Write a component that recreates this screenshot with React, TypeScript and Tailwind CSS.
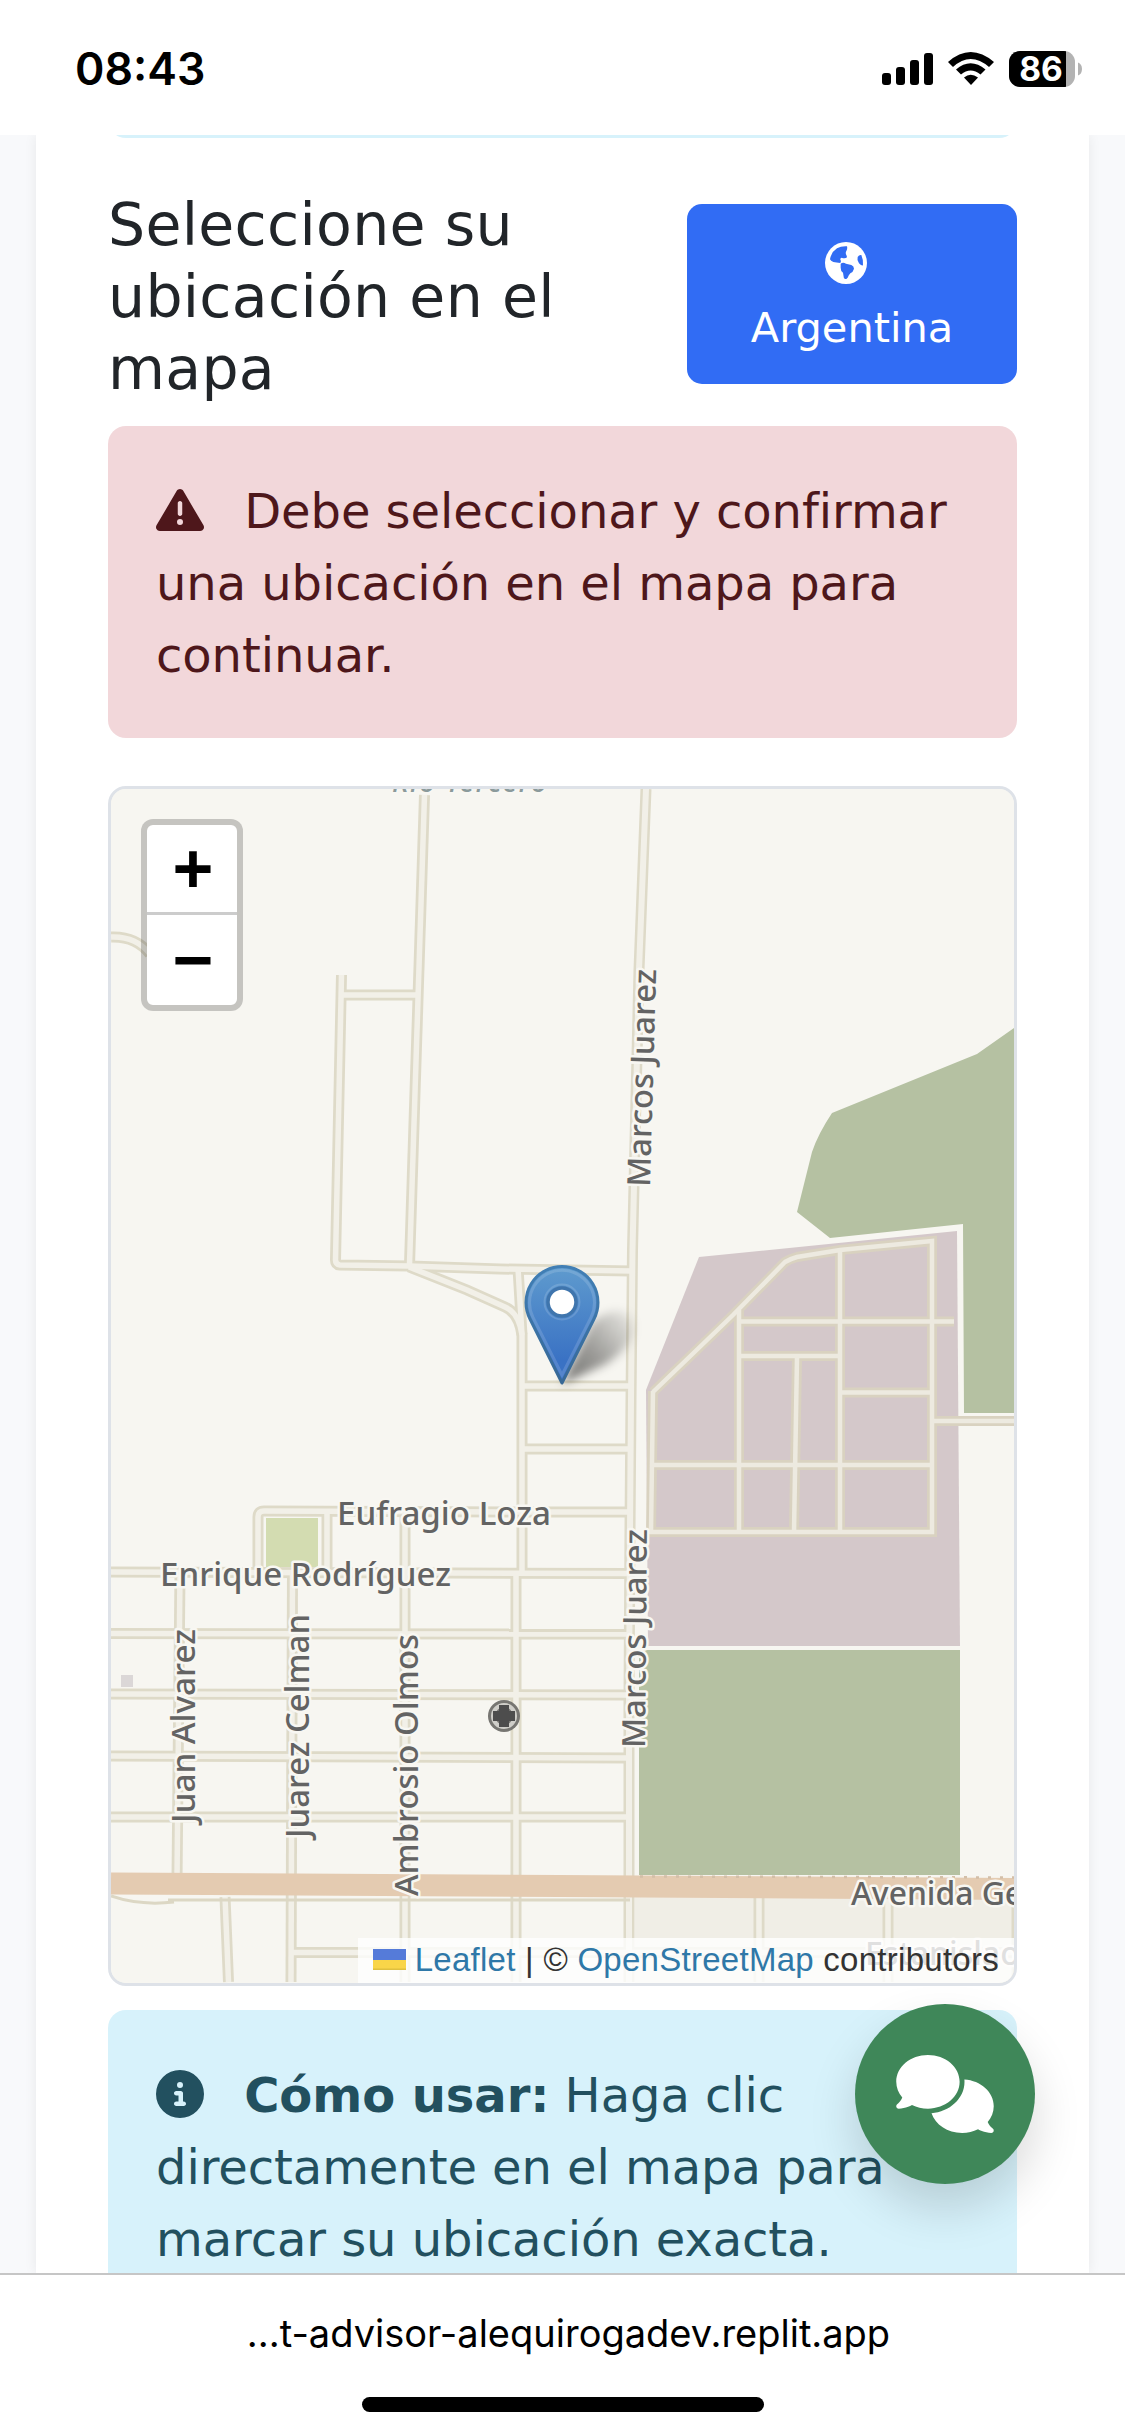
import React from "react";
import { FaCircleInfo, FaComments, FaTriangleExclamation } from "react-icons/fa6";

const streets: string[] = [
  "M424.5 795L409.5 1265",
  "M341.5 975L335.5 1260Q335.5 1264.5 340 1265L409 1266L500 1269L632 1271",
  "M341 995H418",
  "M409 1267L467 1290L505 1307Q519 1313 522 1335",
  "M518 1268L522 1335V1470V1573",
  "M522 1386H631",
  "M522 1449H631",
  "M258 1575V1517Q258 1511 264 1511L522 1512H630",
  "M327 1511V1575",
  "M111 1572L450 1573L630 1573.5",
  "M111 1633.5L630 1634",
  "M111 1694L630 1695",
  "M111 1756L630 1758",
  "M111 1817H630",
  "M180 1572L177 1880",
  "M292.5 1572L291 1982",
  "M405 1511V1982",
  "M516 1573V1982",
  "M225 1897L228.5 1982",
  "M291 1952.5H1014",
  "M759 1897V1982",
  "M888 1897V1982",
  "M1017 1897V1982",
  "M111 937Q136 936 150 954",
];

const mainRoad = "M646 789L639 970L632.5 1250L631 1400L630 1530L629 1700V1982";

const blockStreets: string[] = [
  "M653 1392L733 1315L785 1262Q790 1259 797 1257L840 1250L932 1241V1532H651L653 1391",
  "M739 1310V1532",
  "M840 1250V1532",
  "M797 1357L794 1532",
  "M739 1321.5H954",
  "M739 1356H840",
  "M840 1392.5H933",
  "M651 1465H933",
  "M932 1421H1014",
];

type Label = { text: string; x: number; y: number; length?: number; angle?: number };

const labels: Label[] = [
  { text: "Eufragio Loza", x: 337, y: 1525, length: 214 },
  { text: "Enrique Rodríguez", x: 160, y: 1586, length: 291 },
  { text: "Juan Alvarez", x: 195, y: 1823, length: 194, angle: -90 },
  { text: "Juarez Celman", x: 309, y: 1838, length: 224, angle: -90 },
  { text: "Ambrosio Olmos", x: 418, y: 1896, length: 262, angle: -90 },
  { text: "Marcos Juarez", x: 650, y: 1187, length: 218, angle: -88.4 },
  { text: "Marcos Juarez", x: 645, y: 1748, length: 219, angle: -89.5 },
  { text: "Avenida General", x: 851, y: 1905, length: 250 },
  { text: "Estanislao", x: 865, y: 1965 },
];

function StreetMap() {
  return (
    <svg className="block h-full w-full" viewBox="111 789 903 1194" aria-label="Mapa">
      <defs>
        <linearGradient id="pin" x1="0" y1="0" x2="0" y2="1">
          <stop offset="0" stopColor="#5f9bce" />
          <stop offset="0.8" stopColor="#3a72c4" />
          <stop offset="1" stopColor="#3a72c4" />
        </linearGradient>
        <linearGradient id="pinEdge" x1="0" y1="0" x2="0" y2="1">
          <stop offset="0" stopColor="#417fb5" />
          <stop offset="1" stopColor="#376896" />
        </linearGradient>
        <linearGradient id="shade" gradientUnits="userSpaceOnUse" x1="562" y1="1384" x2="640" y2="1318">
          <stop offset="0" stopColor="#000" stopOpacity="0.55" />
          <stop offset="0.45" stopColor="#000" stopOpacity="0.36" />
          <stop offset="1" stopColor="#000" stopOpacity="0.03" />
        </linearGradient>
        <filter id="soft" x="-30%" y="-30%" width="160%" height="160%">
          <feGaussianBlur stdDeviation="5" />
        </filter>
      </defs>
      <rect x="111" y="789" width="903" height="1194" fill="#f7f6f1" />
      <rect x="635" y="1896" width="379" height="87" fill="#f0eee6" />
      <path d="M1014 1028L977 1054L832 1113Q818 1134 812 1152L797 1212L830 1238L963 1224L964 1413H1014Z" fill="#b5c1a2" />
      <path d="M699 1257L957 1231L960 1646H648L646 1390Z" fill="#d4c8ca" />
      <path d="M639 1650H960V1875H639Z" fill="#b5c1a2" />
      <rect x="266" y="1518" width="52" height="49" fill="#d3dcb1" />
      <rect x="121" y="1675" width="12" height="12" fill="#dbd7d7" />
      <g fill="none" stroke="#dedac8" strokeWidth="11">
        {streets.map((d) => <path key={d} d={d} />)}
        <path d={mainRoad} />
      </g>
      <g fill="none" stroke="#f2f0e8" strokeWidth="5.5">
        {streets.map((d) => <path key={d} d={d} />)}
        <path d={mainRoad} strokeWidth="6" />
      </g>
      <g fill="none" stroke="#d9d2c0" strokeWidth="10">
        {blockStreets.map((d) => <path key={d} d={d} />)}
      </g>
      <g fill="none" stroke="#edeae0" strokeWidth="4.5">
        {blockStreets.map((d) => <path key={d} d={d} />)}
      </g>
      <path d="M111 1896Q140 1906 174 1902M168 1900H630" fill="none" stroke="#dcd7c4" strokeWidth="3" />
      <path d="M111 1883.5L560 1886L1014 1889" fill="none" stroke="#e4cbb1" strokeWidth="22" />
      <path d="M640 1876.5L1014 1877.5" fill="none" stroke="#d3bfa8" strokeWidth="2.5" strokeDasharray="3 9" />
      <g>
        <circle cx="504" cy="1716" r="16" fill="#777672" />
        <circle cx="504" cy="1716" r="11" fill="none" stroke="#cfcec9" strokeWidth="4" />
        <path d="M504 1705V1727M493 1716H515" stroke="#4d4d4d" strokeWidth="10" />
      </g>
      <g
        className="font-['Noto_Sans','Open_Sans',sans-serif]"
        fontSize="32"
        fontWeight="500"
        fill="#636363"
        stroke="#f8f7f2"
        strokeWidth="5"
        strokeLinejoin="round"
        paintOrder="stroke"
      >
        {labels.map((l) => (
          <text
            key={l.text + l.y}
            transform={`translate(${l.x} ${l.y}) rotate(${l.angle ?? 0})`}
            textLength={l.length}
            lengthAdjust="spacingAndGlyphs"
          >
            {l.text}
          </text>
        ))}
        <text x="392" y="792" fill="#8b9a9b" textLength="155" fontStyle="italic" fontSize="28">Río Tercero</text>
      </g>
      <path d="M562 1384L592 1322Q618 1302 632 1318Q640 1342 606 1364Z" fill="url(#shade)" filter="url(#soft)" />
      <path
        d="M562 1383L530 1319A36 36 0 1 1 594 1319Z"
        fill="url(#pin)"
        stroke="url(#pinEdge)"
        strokeWidth="3"
        strokeLinejoin="round"
      />
      <path d="M562 1375L533 1317.500A32.500 32.500 0 1 1 591 1317.500Z" fill="none" stroke="#fff" strokeOpacity="0.14" strokeWidth="3" />
      <circle cx="562" cy="1302" r="17.500" fill="none" stroke="#fff" strokeOpacity="0.14" strokeWidth="2" />
      <circle cx="562" cy="1302" r="14" fill="#fff" stroke="#3f75ad" strokeWidth="3.500" />
    </svg>
  );
}

function GlobeIcon() {
  return (
    <svg className="mr-[12px] size-[42px]" viewBox="432 138 126 126">
      <circle cx="495" cy="201" r="63" fill="#fff" />
      <g fill="#316cf4">
        <path d="M447 190Q451 168 468 157Q480 150 498 151Q500 158 496 165Q492 171 497 179L498 184Q492 189 482 185Q475 187 480 195L478 201Q466 199 457 198Q449 195 447 190Z" />
        <path d="M479 203Q486 198 495 203L511 207Q519 211 519 218Q516 229 508 232Q503 237 500 245L496 249Q488 249 488 242L486 230Q479 226 479 215Z" />
        <path d="M541 177Q547 190 546 208Q540 210 534 202Q527 193 530 183Q534 176 541 177Z" />
      </g>
    </svg>
  );
}

function StatusBar() {
  return (
    <header className="flex h-[135px] shrink-0 items-start justify-between bg-white pl-[75px] pr-[43px] pt-[42px] font-['Inter',sans-serif]">
      <span className="text-[44.6px] font-semibold leading-[54px]">08:43</span>
      <svg className="mt-[7px] h-[40px] w-[202px]" viewBox="880 49 202 40">
        <rect x="882" y="73" width="9" height="12" rx="3" />
        <rect x="896" y="67" width="9" height="18" rx="3" />
        <rect x="910" y="60" width="9" height="25" rx="3" />
        <rect x="924" y="53" width="9" height="32" rx="3" />
        <path d="M948 62Q970.500 42 994 62L989 67Q970.500 51 953 67Z" />
        <path d="M956 69.500Q970.500 57 985.500 69.500L980.500 74.500Q970.500 66.500 961 74.500Z" />
        <path d="M964 77.500Q970.500 72 978 77.500L971 85Z" />
        <clipPath id="charge"><rect x="1009" y="51" width="57" height="36" /></clipPath>
        <rect x="1009" y="51" width="66" height="36" rx="11" fill="#b3b3b3" />
        <rect x="1009" y="51" width="66" height="36" rx="11" clipPath="url(#charge)" />
        <path d="M1078 62.500Q1082 64 1082 69T1078 75.500Z" fill="#b3b3b3" />
        <text x="1041" y="81" textAnchor="middle" fontSize="33.500" fontWeight="700" fill="#fff">86</text>
      </svg>
    </header>
  );
}

export default function App() {
  return (
    <div className="flex h-[2436px] w-[1125px] flex-col overflow-hidden bg-white text-black">
      <StatusBar />
      <main className="relative h-[2138px] shrink-0 overflow-hidden bg-[#f8f9fb] px-9 font-['DejaVu_Sans',Verdana,sans-serif]">
        <div className="h-full bg-white px-[72px] shadow-[0_0_12px_rgba(0,0,0,0.07)]">
          <div className="h-[3px] overflow-hidden">
            <div className="-mt-12 h-[51px] rounded-[18px] bg-[#d7f2fb]" />
          </div>
          <div className="flex h-[264px] items-center justify-between pt-[48px]">
            <h5 className="w-[500px] pt-[5px] text-[58.5px] leading-[72px] tracking-[0.3px] text-[#212529]">
              Seleccione su
              <br />
              ubicación en el
              <br />
              mapa
            </h5>
            <button className="flex h-[180px] w-[330px] flex-col items-center rounded-[15px] bg-[#316cf4] pt-[27px] text-[41.5px] leading-[63px] text-white">
              <span className="flex h-[65px] items-center pb-[2px]">
                <GlobeIcon />
              </span>
              Argentina
            </button>
          </div>
          <div className="mt-[24px] h-[312px] rounded-[18px] bg-[#f2d7da] px-12 pt-[49px] text-[48px] leading-[72px] tracking-[-0.07px] text-[#4e171b]">
            <FaTriangleExclamation className="-mt-2.5 mr-[25px] inline-block size-12 align-middle" /> Debe seleccionar y confirmar
            <br />
            una ubicación en el mapa para
            <br />
            continuar.
          </div>
          <div className="relative mt-12 h-[1200px] overflow-hidden rounded-[18px] border-[3px] border-[#dee2e8] bg-[#f7f6f1]">
            <StreetMap />
            <div className="absolute left-[30px] top-[30px] flex h-[192px] w-[102px] flex-col rounded-[12px] border-[6px] border-black/20 bg-white bg-clip-padding text-center font-['Liberation_Sans',sans-serif] text-[70px] font-bold">
              <button className="h-[90px] border-b-[3px] border-[#ccc] pl-[2px] leading-[86px]">+</button>
              <button className="h-[90px] pl-[2px] leading-[86px]">−</button>
            </div>
            <div className="absolute bottom-0 right-0 flex h-[45px] items-center whitespace-pre bg-white/80 px-[15px] pb-[2px] font-['Liberation_Sans',sans-serif] text-[33px] leading-[43px] tracking-[0.27px] text-[#333]">
              <svg className="mr-[9px] h-[21px] w-[33px]" viewBox="0 0 33 21">
                <path fill="#557bd9" d="M0 0h33v11H0z" />
                <path fill="#f9d549" d="M0 11h33v10H0z" />
                <path fill="#e0c03f" d="M0 19.500h33v1.500H0z" />
              </svg>
              <span className="text-[#2f78a8]">Leaflet</span> | © <span className="text-[#2f78a8]">OpenStreetMap</span> contributors
            </div>
          </div>
          <div className="mt-6 h-[360px] rounded-[18px] bg-[#d7f2fb] px-12 pt-[49px] text-[48px] leading-[72px] tracking-[-0.07px] text-[#22505f]">
            <FaCircleInfo className="-mt-2.5 mr-[25px] inline-block size-12 align-middle" /> <b>Cómo usar:</b> Haga clic
            <br />
            directamente en el mapa para
            <br />
            marcar su ubicación exacta.
          </div>
        </div>
        <button className="absolute right-[90px] top-[1869px] flex size-[180px] items-center justify-center rounded-full bg-[#3f8759] text-white shadow-[0_24px_48px_rgba(0,0,0,0.15)]">
          <FaComments className="h-[78px] w-[98px]" />
        </button>
      </main>
      <footer className="flex flex-1 flex-col items-center border-t-2 border-[#c6c6c6] bg-white pt-[31px] font-['Inter',sans-serif]">
        <span className="ml-[12px] text-[38px] leading-[54px]">...t-advisor-alequirogadev.replit.app</span>
        <span className="mt-[37px] h-[15px] w-[402px] rounded-full bg-black" />
      </footer>
    </div>
  );
}
